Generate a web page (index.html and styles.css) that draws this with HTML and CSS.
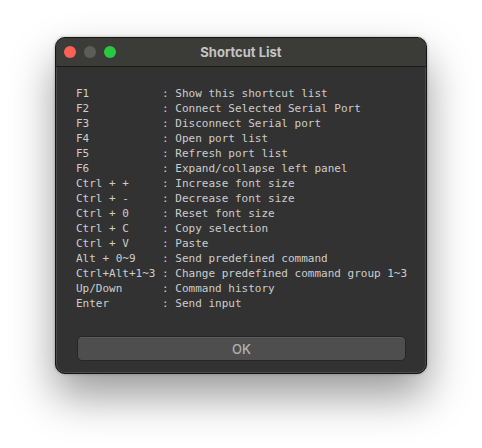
FILE: index.html
```html
<!DOCTYPE html>
<html>
<head>
<meta charset="utf-8">
<link rel="stylesheet" href="styles.css">
</head>
<body>
<div class="window">
  <div class="titlebar">
    <div class="lights">
      <span class="light red"></span>
      <span class="light gray"></span>
      <span class="light green"></span>
    </div>
    <div class="title">Shortcut List</div>
  </div>
  <div class="content">
    <div class="list">
      <div class="row"><span class="key">F1</span><span class="desc">: Show this shortcut list</span></div>
      <div class="row"><span class="key">F2</span><span class="desc">: Connect Selected Serial Port</span></div>
      <div class="row"><span class="key">F3</span><span class="desc">: Disconnect Serial port</span></div>
      <div class="row"><span class="key">F4</span><span class="desc">: Open port list</span></div>
      <div class="row"><span class="key">F5</span><span class="desc">: Refresh port list</span></div>
      <div class="row"><span class="key">F6</span><span class="desc">: Expand/collapse left panel</span></div>
      <div class="row"><span class="key">Ctrl + +</span><span class="desc">: Increase font size</span></div>
      <div class="row"><span class="key">Ctrl + -</span><span class="desc">: Decrease font size</span></div>
      <div class="row"><span class="key">Ctrl + 0</span><span class="desc">: Reset font size</span></div>
      <div class="row"><span class="key">Ctrl + C</span><span class="desc">: Copy selection</span></div>
      <div class="row"><span class="key">Ctrl + V</span><span class="desc">: Paste</span></div>
      <div class="row"><span class="key">Alt + 0~9</span><span class="desc">: Send predefined command</span></div>
      <div class="row"><span class="key">Ctrl+Alt+1~3</span><span class="desc">: Change predefined command group 1~3</span></div>
      <div class="row"><span class="key">Up/Down</span><span class="desc">: Command history</span></div>
      <div class="row"><span class="key">Enter</span><span class="desc">: Send input</span></div>
    </div>
    <button class="ok">OK</button>
  </div>
</div>
</body>
</html>
```
FILE: styles.css
```css
html, body {
  margin: 0;
  background: #ffffff;
}
body {
  padding: 37px 0 0 55px;
  width: 482px;
  height: 448px;
  box-sizing: border-box;
  overflow: hidden;
}
.window {
  width: 372px;
  height: 337px;
  box-sizing: border-box;
  border-radius: 10px;
  background: #323232;
  border: 1px solid #151515;
  box-shadow: inset 0 0 0 1px rgba(255,255,255,0.12), 0 22px 44px rgba(0,0,0,0.4), 0 0 3px rgba(0,0,0,0.3);
  display: flex;
  flex-direction: column;
  overflow: hidden;
}
.titlebar {
  position: relative;
  height: 28px;
  flex: none;
  background: #3b3b38;
  border-bottom: 1px solid #1b1b1b;
  display: flex;
  align-items: center;
}
.lights {
  display: flex;
  gap: 8px;
  padding-left: 8px;
}
.light {
  width: 12px;
  height: 12px;
  border-radius: 50%;
  display: block;
}
.red { background: #fe5f57; }
.gray { background: #5c5c5a; }
.green { background: #28c840; }
.title {
  position: absolute;
  left: 0;
  right: 0;
  top: 0;
  bottom: 0;
  display: flex;
  align-items: center;
  justify-content: center;
  font-family: "Inter", "Liberation Sans", sans-serif;
  font-weight: 700;
  font-size: 13px;
  color: #c4c4c4;
  pointer-events: none;
}
.content {
  flex: 1;
  display: flex;
  flex-direction: column;
  padding: 19px 20px 12px 20px;
}
.list {
  font-family: "DejaVu Sans Mono", monospace;
  font-size: 11px;
  line-height: 15px;
  color: #cdcdcd;
  flex: 1;
}
.row {
  display: flex;
  white-space: pre;
}
.key {
  width: 13ch;
  flex: none;
}
.ok {
  flex: none;
  height: 25px;
  width: 329px;
  margin-left: 1px;
  border-radius: 5px;
  border: 1px solid #262626;
  background: #4e4e4e;
  box-shadow: inset 0 1px 0 rgba(255,255,255,0.08);
  color: #b2b2b2;
  font-family: "Inter", "Liberation Sans", sans-serif;
  font-weight: 500;
  font-size: 13px;
  padding: 0;
}
```
